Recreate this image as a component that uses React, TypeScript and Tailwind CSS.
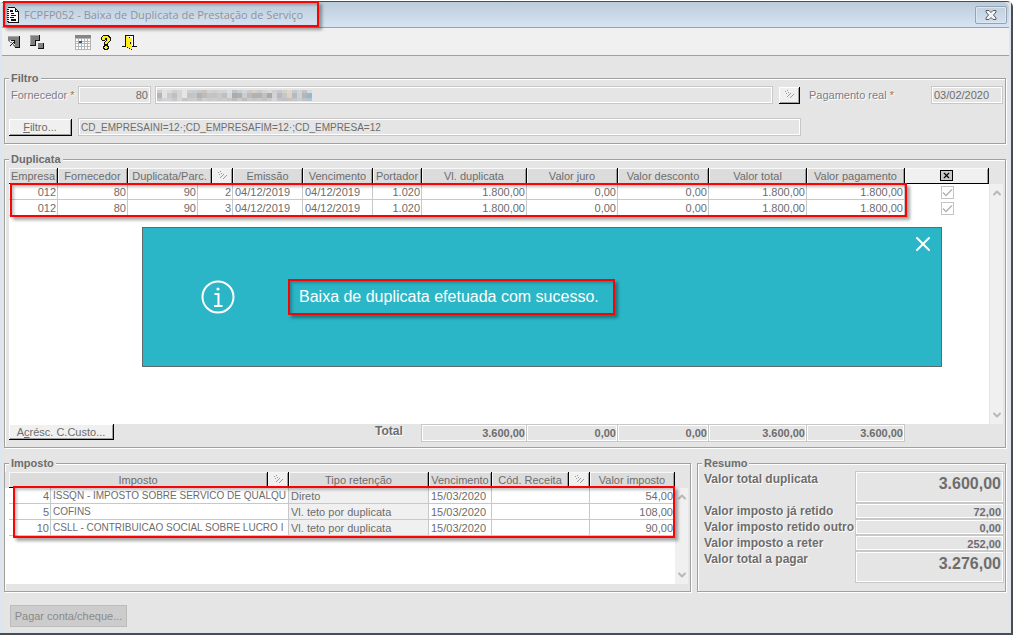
import type { ReactNode } from "react";
import { ChevronDownIcon, ChevronUpIcon, XIcon } from "lucide-react";

type Duplicata = {
  empresa: string;
  fornecedor: string;
  duplicata: string;
  parcela: string;
  emissao: string;
  vencimento: string;
  portador: string;
  valor: string;
  juro: string;
  desconto: string;
  total: string;
  pagamento: string;
};

const duplicatas: Duplicata[] = ["2", "3"].map((parcela) => ({
  empresa: "012",
  fornecedor: "80",
  duplicata: "90",
  parcela,
  emissao: "04/12/2019",
  vencimento: "04/12/2019",
  portador: "1.020",
  valor: "1.800,00",
  juro: "0,00",
  desconto: "0,00",
  total: "1.800,00",
  pagamento: "1.800,00",
}));

const impostos = [
  { codigo: "4", nome: "ISSQN - IMPOSTO SOBRE SERVICO DE QUALQU", tipo: "Direto", vencimento: "15/03/2020", valor: "54,00" },
  { codigo: "5", nome: "COFINS", tipo: "Vl. teto por duplicata", vencimento: "15/03/2020", valor: "108,00" },
  { codigo: "10", nome: "CSLL - CONTRIBUICAO SOCIAL SOBRE LUCRO I", tipo: "Vl. teto por duplicata", vencimento: "15/03/2020", valor: "90,00" },
];

const resumo = [
  { id: "total-duplicata", label: "Valor total duplicata", valor: "3.600,00", destaque: true },
  { id: "ja-retido", label: "Valor imposto já retido", valor: "72,00", destaque: false },
  { id: "retido-outro", label: "Valor imposto retido outro", valor: "0,00", destaque: false },
  { id: "a-reter", label: "Valor imposto a reter", valor: "252,00", destaque: false },
  { id: "total-pagar", label: "Valor total a pagar", valor: "3.276,00", destaque: true },
];

const fieldClass =
  "h-[18px] min-w-0 border border-[#c8c8c8] bg-[#e5e5e5] text-[#6d6d6d] shadow-[inset_1px_1px_#fff,inset_-1px_-1px_#fff] outline-none";
const headClass =
  "h-4 border-r border-b border-black p-0 text-center font-normal whitespace-nowrap shadow-[inset_1px_1px_#f8f8f8,inset_-1px_0_#a0a0a0]";
const cellClass = "h-4 overflow-hidden border-r border-b border-[#c8c8c8] whitespace-nowrap";
const numberCell = `${cellClass} px-px text-right`;
const textCell = `${cellClass} pl-0.5 text-left`;
const totalClass = `${fieldClass} px-px text-right leading-4 font-bold`;
const raisedClass =
  "border-r border-b border-black bg-[#f0f0f0] shadow-[inset_1px_1px_#fff,inset_-1px_-1px_#a0a0a0]";

// Moldura vermelha sobre o conteúdo
const Destaque = ({ className }: { className: string }) => (
  <div
    className={`pointer-events-none absolute border-2 border-[#f80404] shadow-[3px_3px_3px_rgba(0,0,0,0.35),inset_2px_2px_3px_rgba(0,0,0,0.25)] ${className}`}
  />
);

const Grupo = ({ titulo, className, children }: { titulo: string; className: string; children: ReactNode }) => (
  <fieldset className={`min-w-0 border border-[#a0a0a0] shadow-[1px_1px_#fff,inset_1px_1px_#fff] ${className}`}>
    <legend className="ml-1 bg-[#e5e5e5] px-0.5 text-[11px] leading-4 font-bold text-[#6d6d6d]">{titulo}</legend>
    {children}
  </fieldset>
);

const Titulo = ({ children, colSpan }: { children: ReactNode; colSpan?: number }) => (
  <th className={`${headClass} bg-[#dcdcdc]`} colSpan={colSpan}>
    {children}
  </th>
);

const Lupa = () => (
  <svg width="11" height="9" viewBox="0 0 11 9" className="mx-auto" shapeRendering="crispEdges" aria-hidden="true">
    <path
      d="M1 1h1v1h-1zM3 0h1v1h-1zM4 2h1v1h-1zM2 3h1v1h-1zM6 3h1v1h-1zM5 4h1v1h-1zM4 5h1v1h-1zM3 6h1v1h-1zM9 4h1v1h-1zM8 5h1v1h-1zM7 6h1v1h-1zM6 7h1v1h-1z"
      fill="#9a9a9a"
    />
  </svg>
);

const TituloLupa = () => (
  <th className={`${headClass} bg-[#f0f0f0]`}>
    <Lupa />
  </th>
);

const Rolagem = () => (
  <div className="flex w-[13px] shrink-0 flex-col items-center justify-between bg-[#f0f0f0] py-[3px] text-[#b8b8b8]">
    <ChevronUpIcon className="h-3 w-3" strokeWidth={4} />
    <ChevronDownIcon className="h-3 w-3" strokeWidth={4} />
  </div>
);

const IconeDocumento = () => (
  <svg width="12" height="16" viewBox="0 0 12 16" className="shrink-0" shapeRendering="crispEdges" aria-hidden="true">
    <path d="M1 1h7l3 3v11H1z" fill="#fff" />
    <path d="M1 0h7v1H1zM8 1h1v1H8zM9 2h1v1H9zM10 3h1v1h-1zM11 4h1v11h-1zM1 15h11v1H1zM8 2h1v2h2v1H8z" fill="#111" />
    <path d="M0 2h2v1H0zM0 4h2v1H0zM0 6h2v1H0zM0 8h2v1H0zM0 10h2v1H0zM0 12h2v1H0zM0 14h2v1H0z" fill="#222" />
    <path d="M3 3h3v2H3zM4 6h3v1H4zM4 8h5v1H4zM3 10h4v1H3zM4 12h5v2H4z" fill="#111" />
  </svg>
);

const IconeAbrir = () => (
  <svg width="12" height="12" viewBox="0 0 12 12" shapeRendering="crispEdges" aria-hidden="true">
    <path d="M0 0h11v11H6L0 5z" fill="#808080" />
    <path d="M11 0h1v12H7v-1h4z" fill="#111" />
    <path d="M0 0h11v1H0z" fill="#a8a8a8" />
    <path d="M2 4h5v5H6V7L2 11H1v-1l3-4H2z" fill="#e8e8e8" />
    <path d="M3 4h4v4H6V5H3zM5 6h1v1H5zM4 7h1v1H4zM3 8h1v1H3zM2 9h1v1H2z" fill="#111" />
  </svg>
);

const IconeCascata = () => (
  <svg width="15" height="14" viewBox="0 0 15 14" shapeRendering="crispEdges" aria-hidden="true">
    <path d="M0 0h9v5H5v5H0z" fill="#808080" />
    <path d="M0 0h9v1H1v9H0z" fill="#a8a8a8" />
    <path d="M9 0h1v6H6v5H0v-1h5V5h4z" fill="#111" />
    <path d="M8 8h5v5H8z" fill="#808080" />
    <path d="M13 8h1v6H8v-1h5z" fill="#111" />
  </svg>
);

const IconeCalendario = () => (
  <svg width="16" height="15" viewBox="0 0 16 15" shapeRendering="crispEdges" aria-hidden="true">
    <path d="M0 0h16v15H0z" fill="#b4b4b4" />
    <path d="M0 0h16v3H0z" fill="#858585" />
    <path
      d="M1 4h2v2H1zM4 4h2v2H4zM7 4h2v2H7zM10 4h2v2h-2zM13 4h2v2h-2zM1 7h2v1H1zM7 7h2v1H7zM10 7h2v1h-2zM13 7h2v1h-2zM1 9h2v2H1zM4 9h2v2H4zM7 9h2v2H7zM10 9h2v2h-2zM13 9h2v2h-2zM1 12h2v2H1zM4 12h2v2H4zM7 12h2v2H7zM10 12h2v2h-2zM13 12h2v2h-2z"
      fill="#fff"
    />
    <path d="M4 6h3v2H4z" fill="#1b5e9e" />
  </svg>
);

const IconeAjuda = () => (
  <svg width="10" height="15" viewBox="0 0 10 15" shapeRendering="crispEdges" aria-hidden="true">
    <path d="M2 0h6v1h1v1h1v4H9v1H8v1H7v2H3V7h1V6h1V5H4v1H1V5H0V2h1V1h1zM3 10h4v1h1v3H7v1H3v-1H2v-3h1z" fill="#111" />
    <path d="M2 1h5v1h1v1h1v3H8v1H7v1H6v1H4V7h1V6h1V3H4v2H1V2h1zM4 11h2v1h1v1H6v1H4v-1H3v-1h1z" fill="#ffee1c" />
  </svg>
);

const IconeSair = () => (
  <svg width="15" height="15" viewBox="0 0 15 15" shapeRendering="crispEdges" aria-hidden="true">
    <path d="M3 0h9v11h3v1h-5v3H9v-1H7v-1H5v-1H0v-1h3z" fill="#111" />
    <path d="M5 1h6v10h-1V3H8V2H5z" fill="#fff" />
    <path d="M4 1h1v1h2v1h3v11H8v-1H6v-1H4z" fill="#ffee1c" />
    <path d="M8 7h1v2H8z" fill="#111" />
  </svg>
);

const IconeFecharJanela = () => (
  <svg width="12" height="10" viewBox="0 0 12 10" aria-hidden="true">
    <path d="M1 .5h3l2 2 2-2h3v1.500L8.500 5 11 8v1.500H8l-2-2-2 2H1V8l2.500-3L1 2z" fill="#f4f4f4" stroke="#555a66" />
  </svg>
);

const tonsMosaico = [
  ["#cdd0d2", "#e2e2e2", "#dcdcdc", "#cdd1d4", "#d6d6d6", "#e4e4e4", "#cfcfcf", "#c9cdd0", "#c4cacd", "#c9c2bd", "#d4d4d4", "#cfcfcf", "#d7d3cd", "#d0d4d8", "#dedede", "#bfc2c5", "#c9cdd0", "#d6d6d6", "#cbcbcb", "#d6d0c9", "#c8ccd0", "#d3d3d3", "#dadada", "#d0d0d0", "#c6cace", "#d4cfc9", "#e0d6cd", "#c6c9cc", "#cfd4d9", "#c3c3c3", "#d7dbde"],
  ["#b9b4b1", "#e2e2e2", "#cfcac5", "#bac1c8", "#d4d4d4", "#e6e6e6", "#c6c2be", "#c1c6ca", "#aeb3b8", "#c2bbb4", "#c4c4c4", "#bfc4ca", "#cfc8c1", "#bcc0c4", "#d8d8d8", "#a9abae", "#b1aeab", "#c8ced4", "#b8bcc0", "#b7b1ac", "#aeb3b9", "#c0c0c0", "#aba8a6", "#d2d2d2", "#b6bac0", "#c9c5c0", "#ddd2c8", "#b4bac0", "#d6d0ca", "#b2b7bc", "#8fbad0"],
  ["#c6c9cb", "#d3d3d3", "#d0d3d6", "#c3c8cc", "#d6d6d6", "#c4c4c4", "#c8ccd0", "#d0cbc6", "#bec2c6", "#ced1d3", "#c7cacd", "#cdcdcd", "#c6c9cc", "#cfcac5", "#c3c7cb", "#bdbdbd", "#c7cbce", "#c1bcb7", "#cacaca", "#c1c5c9", "#ccc8c3", "#bfc3c7", "#cacaca", "#d4d8db", "#c5c5c5", "#bfc3c8", "#c8c3be", "#c3c7ca", "#cdcdcd", "#c0c4c9", "#b4c3cc"],
];

// Nome do fornecedor oculto
const NomeOculto = () => (
  <svg width="155" height="11" viewBox="0 0 155 11" shapeRendering="crispEdges" aria-hidden="true">
    {tonsMosaico.map((linha, y) =>
      linha.map((cor, x) => (
        <rect key={`${x}-${y}`} x={x * 5} y={[0, 3, 8][y]} width="5" height={[3, 5, 3][y]} fill={cor} />
      ))
    )}
  </svg>
);

const App = () => {
  return (
    <div className="bg-white pt-px pb-0.5 font-['Liberation_Sans',Arial,sans-serif] text-[11px] leading-[14px] text-[#6d6d6d]">
      <div className="rounded-t-md border-t border-r-2 border-b-2 border-[#4c4c50] bg-[#e5e5e5]">
        <div className="border-x-2 border-b border-[#dbe6f3]">
          {/* BARRA DE TÍTULO */}
          <header className="flex h-[26px] items-center justify-between rounded-t-md border-b border-[#a0a0a0] bg-linear-to-b from-[#bccbd9] to-[#d6e4f3] pr-0.5 pl-px">
            <div className="relative flex h-full w-[316px] items-center gap-[5px] pl-1">
              <IconeDocumento />
              <h1 className="font-['Open_Sans','Noto_Sans',sans-serif] text-[11px] whitespace-nowrap text-[#8e959d]">
                FCPFP052 - Baixa de Duplicata de Prestação de Serviço
              </h1>
              <Destaque className="inset-x-0 -top-px bottom-0" />
            </div>
            <button
              aria-label="Fechar janela"
              className="flex h-[18px] w-8 items-center justify-center rounded-xs border border-[#97a3b1] shadow-[inset_0_0_0_1px_#dde7f1]"
            >
              <IconeFecharJanela />
            </button>
          </header>

          {/* BARRA DE FERRAMENTAS */}
          <nav className="flex h-7 items-center border-b border-[#a0a0a0] bg-[#f0f0f0] pt-px pl-1.5">
            <button aria-label="Abrir"><IconeAbrir /></button>
            <button aria-label="Cascata" className="ml-2.5"><IconeCascata /></button>
            <button aria-label="Calendário" className="ml-[30px]"><IconeCalendario /></button>
            <button aria-label="Ajuda" className="ml-2.5"><IconeAjuda /></button>
            <button aria-label="Sair" className="ml-[11px]"><IconeSair /></button>
          </nav>

          <main className="flex flex-col gap-[7px] pt-3.5 pr-[3px] pb-[5px] pl-0.5">
            {/* FILTRO */}
            <Grupo titulo="Filtro" className="h-[74px]">
              <div className="flex items-center pr-0.5 pl-1">
                <label htmlFor="fornecedor" className="w-[69px] pl-0.5 text-[#7c7c88] [text-shadow:1px_1px_#fff]">
                  Fornecedor <span className="text-[#a07850]">*</span>
                </label>
                <input id="fornecedor" readOnly value="80" className={`${fieldClass} w-[73px] pr-0.5 text-right`} />
                <div className={`${fieldClass} ml-1 flex flex-1 items-center pl-px`}>
                  <NomeOculto />
                </div>
                <button aria-label="Pesquisar fornecedor" className={`ml-1.5 h-[17px] w-[21px] ${raisedClass}`}>
                  <Lupa />
                </button>
                <label htmlFor="pagamento" className="ml-[9px] w-[122px] text-[#7c7c88] [text-shadow:1px_1px_#fff]">
                  Pagamento real <span className="text-[#a07850]">*</span>
                </label>
                <input id="pagamento" readOnly value="03/02/2020" className={`${fieldClass} w-[72px] px-0.5`} />
              </div>
              <div className="mt-3.5 flex items-center pl-1">
                <button className={`h-[17px] w-[63px] ${raisedClass}`}>
                  <span className="underline">F</span>iltro...
                </button>
                <input
                  aria-label="Filtro"
                  readOnly
                  value="CD_EMPRESAINI=12·;CD_EMPRESAFIM=12·;CD_EMPRESA=12"
                  className={`${fieldClass} mr-[204px] ml-1.5 flex-1 px-0.5 text-[10px]`}
                />
              </div>
            </Grupo>

            {/* DUPLICATA */}
            <Grupo titulo="Duplicata" className="relative h-[297px]">
              <div className="mt-px ml-1 flex bg-white">
                <div className="relative h-64 min-w-0 flex-1">
                  <table className="w-full table-fixed border-separate border-spacing-0">
                    <colgroup>
                      <col className="w-[49px]" />
                      <col className="w-[70px]" />
                      <col className="w-[70px]" />
                      <col className="w-[14px]" />
                      <col className="w-[21px]" />
                      <col className="w-[70px]" />
                      <col className="w-[70px]" />
                      <col className="w-[49px]" />
                      <col className="w-[105px]" />
                      <col className="w-[91px]" />
                      <col className="w-[91px]" />
                      <col className="w-[98px]" />
                      <col className="w-[98px]" />
                      <col />
                    </colgroup>
                    <thead>
                      <tr>
                        <Titulo>Empresa</Titulo>
                        <Titulo>Fornecedor</Titulo>
                        <Titulo colSpan={2}>Duplicata/Parc.</Titulo>
                        <TituloLupa />
                        <Titulo>Emissão</Titulo>
                        <Titulo>Vencimento</Titulo>
                        <Titulo>Portador</Titulo>
                        <Titulo>Vl. duplicata</Titulo>
                        <Titulo>Valor juro</Titulo>
                        <Titulo>Valor desconto</Titulo>
                        <Titulo>Valor total</Titulo>
                        <Titulo>Valor pagamento</Titulo>
                        <th className={`${headClass} bg-[#f0f0f0]`}>
                          <button aria-label="Marcar todos" className="mx-auto block border border-black bg-[#c8c8c8]">
                            <XIcon className="h-[9px] w-[11px] text-black" strokeWidth={3} />
                          </button>
                        </th>
                      </tr>
                    </thead>
                    <tbody>
                      {duplicatas.map((item) => (
                        <tr key={item.parcela}>
                          <td className={numberCell}>{item.empresa}</td>
                          <td className={numberCell}>{item.fornecedor}</td>
                          <td className={numberCell}>{item.duplicata}</td>
                          <td className={numberCell} colSpan={2}>{item.parcela}</td>
                          <td className={textCell}>{item.emissao}</td>
                          <td className={textCell}>{item.vencimento}</td>
                          <td className={numberCell}>{item.portador}</td>
                          <td className={numberCell}>{item.valor}</td>
                          <td className={numberCell}>{item.juro}</td>
                          <td className={numberCell}>{item.desconto}</td>
                          <td className={numberCell}>{item.total}</td>
                          <td className={numberCell}>{item.pagamento}</td>
                          <td className="p-0">
                            <input
                              type="checkbox"
                              checked
                              readOnly
                              aria-label={`Selecionar parcela ${item.parcela}`}
                              className="mx-auto block h-[13px] w-[13px] appearance-none border border-[#c4c4c4] bg-white bg-[url('data:image/svg+xml,%3Csvg%20xmlns=%22http://www.w3.org/2000/svg%22%20viewBox=%220%200%2011%2011%22%3E%3Cpath%20d=%22M1%205.5l3%203l6-6%22%20fill=%22none%22%20stroke=%22%23b0b0b0%22%20stroke-width=%221.300%22/%3E%3C/svg%3E')]"
                            />
                          </td>
                        </tr>
                      ))}
                    </tbody>
                  </table>
                  <Destaque className="top-[15px] left-px h-[34px] w-[897px]" />
                </div>
                <div className="flex bg-[#e5e5e5] pt-4 pr-0.5 pl-px">
                  <Rolagem />
                </div>
              </div>

              <div className="flex pl-1">
                <button className={`h-4 w-[105px] ${raisedClass}`}>
                  A<span className="underline">c</span>résc. C.Custo...
                </button>
                <span className="ml-[261px] w-[46px] text-[12px] font-bold [text-shadow:1px_1px_#fff]">Total</span>
                <output className={`${totalClass} w-[106px]`}>3.600,00</output>
                <output className={`${totalClass} w-[91px] border-l-0`}>0,00</output>
                <output className={`${totalClass} w-[91px] border-l-0`}>0,00</output>
                <output className={`${totalClass} w-[98px] border-l-0`}>3.600,00</output>
                <output className={`${totalClass} w-[98px] border-l-0`}>3.600,00</output>
              </div>

              {/* MENSAGEM */}
              <div
                role="alert"
                className="absolute top-[60px] right-[63px] left-[137px] flex h-[140px] items-center border border-[#5f6a6c] bg-[#2ab6c6] pl-[58px] text-white"
              >
                <svg width="34" height="34" viewBox="0 0 34 34" fill="none" stroke="currentColor" strokeWidth="2" aria-hidden="true">
                  <circle cx="17" cy="17" r="15.500" />
                  <path d="M13.500 14h4v12M13 26h8.500" />
                  <circle cx="17" cy="9" r="1.600" fill="currentColor" stroke="none" />
                </svg>
                <p className="relative ml-[53px] py-2 pr-4 pl-[11px] text-[16px] leading-5">
                  Baixa de duplicata efetuada com sucesso.
                  <Destaque className="inset-0" />
                </p>
                <button aria-label="Fechar" className="absolute top-1 right-1.5">
                  <XIcon className="h-6 w-6" strokeWidth={2} />
                </button>
              </div>
            </Grupo>

            <div className="flex gap-1.5">
              {/* IMPOSTO */}
              <Grupo titulo="Imposto" className="h-[137px] flex-1">
                <div className="mt-px flex pr-0.5">
                  <div className="relative h-28 min-w-0 flex-1 bg-linear-to-b from-[#e5e5e5] from-[16px] to-white to-[16px] pl-1">
                    <table className="w-full table-fixed border-separate border-spacing-0">
                      <colgroup>
                        <col className="w-[42px]" />
                        <col />
                        <col className="w-[21px]" />
                        <col className="w-[140px]" />
                        <col className="w-[63px]" />
                        <col className="w-[77px]" />
                        <col className="w-[21px]" />
                        <col className="w-[85px]" />
                      </colgroup>
                      <thead>
                        <tr>
                          <Titulo colSpan={2}>Imposto</Titulo>
                          <TituloLupa />
                          <Titulo>Tipo retenção</Titulo>
                          <Titulo>Vencimento</Titulo>
                          <Titulo>Cód. Receita</Titulo>
                          <TituloLupa />
                          <Titulo>Valor imposto</Titulo>
                        </tr>
                      </thead>
                      <tbody>
                        {impostos.map((item) => (
                          <tr key={item.codigo}>
                            <td className={numberCell}>{item.codigo}</td>
                            <td className={`${textCell} text-[10px]`} colSpan={2}>{item.nome}</td>
                            <td className={`${textCell} bg-[#f0f0f0]`}>{item.tipo}</td>
                            <td className={textCell}>{item.vencimento}</td>
                            <td className={textCell} colSpan={2}></td>
                            <td className={numberCell}>{item.valor}</td>
                          </tr>
                        ))}
                      </tbody>
                    </table>
                    <Destaque className="top-3.5 right-0 left-2 h-[52px]" />
                  </div>
                  <div className="flex pt-4">
                    <Rolagem />
                  </div>
                </div>
              </Grupo>

              {/* RESUMO */}
              <Grupo titulo="Resumo" className="h-[137px] w-[309px] shrink-0">
                <div className="pr-px pl-1.5">
                  {resumo.map((item) => (
                    <div key={item.id} className="flex">
                      <label htmlFor={item.id} className="flex-1 text-[12px] leading-4 font-bold whitespace-nowrap [text-shadow:1px_1px_#fff]">
                        {item.label}
                      </label>
                      <output
                        id={item.id}
                        className={`block w-[149px] border border-[#c8c8c8] px-0.5 text-right font-bold shadow-[inset_1px_1px_#fff,inset_-1px_-1px_#fff] ${
                          item.destaque ? "h-8 pt-0.5 text-[16px] leading-5" : "h-4 text-[11px] leading-4"
                        }`}
                      >
                        {item.valor}
                      </output>
                    </div>
                  ))}
                </div>
              </Grupo>
            </div>

            <button disabled className="mt-1.5 ml-1.5 h-[22px] w-[117px] border border-[#bcbcbc] bg-[#cccccc] text-[#8a8a8a]">
              Pagar conta/cheque...
            </button>
          </main>
        </div>
      </div>
    </div>
  );
};

export default App;
